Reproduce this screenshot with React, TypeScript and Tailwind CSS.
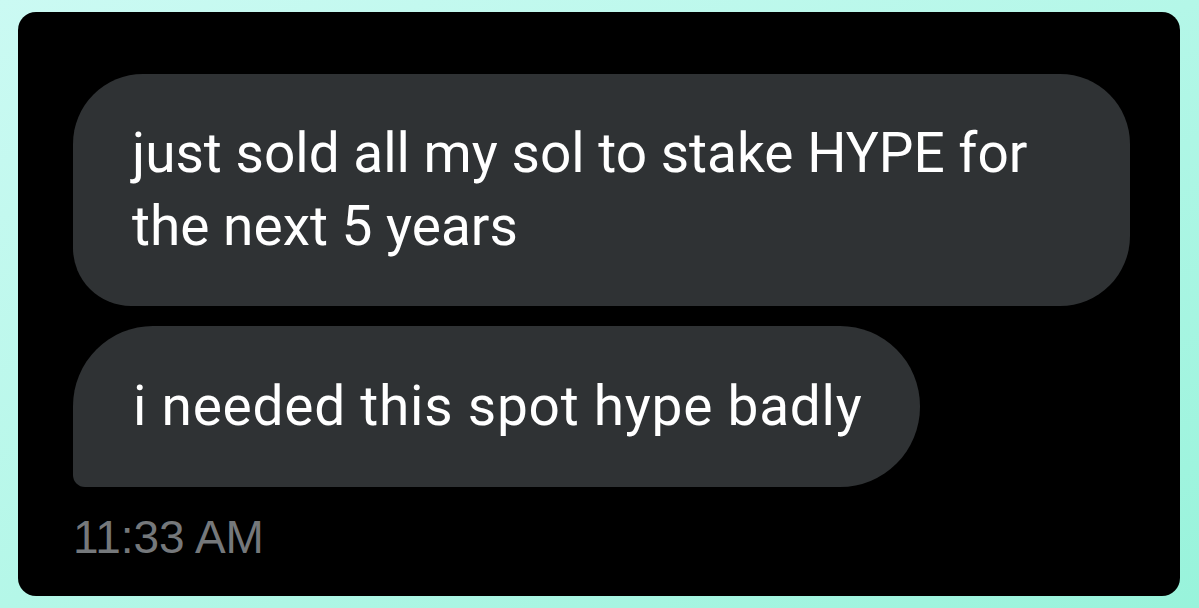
import React from 'react';

const messages = [
  { id: 1, text: 'just sold all my sol to stake HYPE for the next 5 years' },
  { id: 2, text: 'i needed this spot hype badly' },
];

export default function App() {
  return (
    <div className="w-[1199px] h-[608px] bg-gradient-to-br from-[#cbfaf3] via-[#b4f7e8] to-[#98f3db] pl-[18px] pr-[19px] py-[12px]">
      <div className="h-full rounded-[18px] bg-black pl-[55px] pr-[50px] pt-[62px]">
        {/* Bulles */}
        <div className="flex flex-col items-start gap-[20px]" style={{ fontFamily: 'Roboto, "Noto Sans", sans-serif' }}>
          <div className="w-[1057px] rounded-[70px] rounded-bl-[58px] bg-[#2f3234] pl-[59px] pr-[40px] py-[43px] text-[55px] leading-[73px] text-white">
            just sold all my sol to stake HYPE for
            <br />
            the next 5 years
          </div>
          <div className="w-fit rounded-[80px] rounded-bl-[12px] bg-[#2f3234] pl-[60px] pr-[57px] py-[44px] text-[55px] leading-[73px] tracking-[0.75px] text-white">
            {messages[1].text}
          </div>
        </div>

        {/* Heure */}
        <div
          className="mt-[27px] text-[46px] leading-[46px] text-[#75787b]"
          style={{ fontFamily: '"Liberation Sans", Arial, sans-serif' }}
        >
          11:33 AM
        </div>
      </div>
    </div>
  );
}
